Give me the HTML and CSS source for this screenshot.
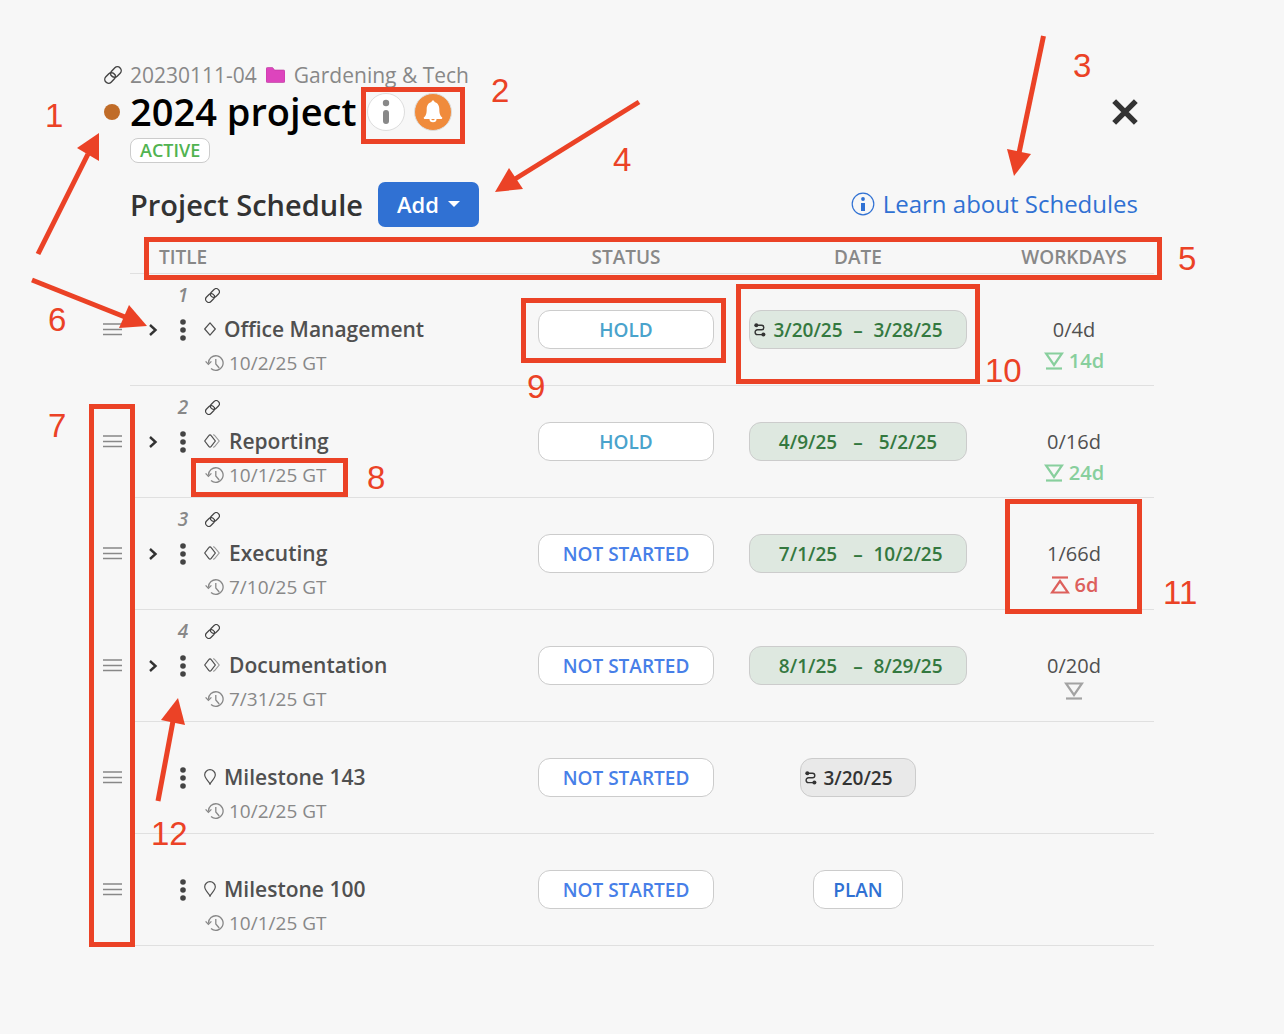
FILE: index.html
```
<!DOCTYPE html>
<html lang="en">
<head>
  <meta charset="UTF-8" />
  <meta name="viewport" content="width=device-width, initial-scale=1.0" />
  <title>2024 project - Project Schedule</title>
  <link rel="stylesheet" href="styles.css">
</head>
<body>
  <!-- Shared icons -->
  <svg class="sprite" aria-hidden="true">
    <symbol id="i-link" viewBox="0 0 24 24">
      <g fill="none" stroke="currentColor" stroke-width="1.900" stroke-linecap="round">
        <path d="M10 13a5 5 0 0 0 7.54.54l4-4a5 5 0 0 0-7.07-7.07l-4.720 4.710a4.500 4.500 0 0 0-.6 5" />
        <path d="M14 11a5 5 0 0 0-7.54-.54l-4 4a5 5 0 0 0 7.07 7.07l4.710-4.710a4.500 4.500 0 0 0 .6-5" />
      </g>
    </symbol>
    <symbol id="i-drag" viewBox="0 0 19 13">
      <path d="M0 1h19M0 6.500h19M0 11.500h19" stroke="currentColor" stroke-width="1.300" />
    </symbol>
    <symbol id="i-chevron" viewBox="0 0 10 12">
      <path d="M2 1l5.500 5L2 11" fill="none" stroke="currentColor" stroke-width="2.400" />
    </symbol>
    <symbol id="i-dots" viewBox="0 0 6 22">
      <g fill="currentColor"><circle cx="3" cy="3" r="2.800" /><circle cx="3" cy="11" r="2.800" /><circle cx="3" cy="19" r="2.800" /></g>
    </symbol>
    <symbol id="i-diamond" viewBox="0 0 12 14">
      <path d="M6 .8L11.300 7 6 13.200.7 7z" fill="none" stroke="currentColor" stroke-width="1.200" stroke-linejoin="round" />
    </symbol>
    <symbol id="i-diamonds" viewBox="0 0 17 14">
      <path d="M6 .8q.7 0 1.200.8L11.300 7 7.200 12.400Q6 14 4.800 12.400L.7 7 4.800 1.600Q5.300.8 6 .8z" fill="none" stroke="currentColor" stroke-width="1.200" />
      <path d="M9 .8q1.200 0 1.800.8L15.200 7l-4.400 5.400q-.6.8-1.800.8" fill="none" stroke="#999" stroke-width="1.100" />
    </symbol>
    <symbol id="i-pin" viewBox="0 0 12 16">
      <path d="M6 15.200C5 12.500.7 9.500.7 5.800a5.300 5.100 0 0 1 10.600 0C11.300 9.500 7 12.500 6 15.200z" fill="none" stroke="currentColor" stroke-width="1.200" />
    </symbol>
    <symbol id="i-history" viewBox="0 0 19 17">
      <g fill="none" stroke="currentColor" stroke-width="1.300">
        <path d="M3.500 8.500A7.300 7.300 0 1 1 6 13.600" />
        <path d="M.6 6.400l2.800 3 3-3M10.800 4v5l3.400 4" />
      </g>
    </symbol>
    <symbol id="i-route" viewBox="0 0 12 14">
      <path d="M2.500 2.200h5a2.300 2.300 0 0 1 0 4.600h-4a2.300 2.300 0 0 0 0 4.800h5.500" fill="none" stroke="#333" stroke-width="1.400" />
      <circle cx="2.300" cy="2.200" r="2" fill="#333" /><circle cx="9.400" cy="11.600" r="2" fill="#333" />
    </symbol>
    <symbol id="i-down" viewBox="0 0 20 18">
      <path d="M2 1.500h16L10 13z" fill="none" stroke="currentColor" stroke-width="2.200" />
      <path d="M2 16.500h16" stroke="currentColor" stroke-width="2.200" />
    </symbol>
    <symbol id="i-up" viewBox="0 0 20 18">
      <path d="M2 16.500h16L10 5z" fill="none" stroke="currentColor" stroke-width="2.200" />
      <path d="M2 1.500h16" stroke="currentColor" stroke-width="2.200" />
    </symbol>
  </svg>

  <main class="page">
    <header class="project">
      <a class="gutter" href="#" aria-label="Copy project link"><svg class="icon-link-lg"><use href="#i-link" /></svg></a>
      <div class="crumbs">
        <span>20230111-04</span>
        <svg class="icon-folder" viewBox="0 0 19 16"><path d="M0 2Q0 .5 1.500.5H6q1 0 1.500 1L8.500 3H17.500Q19 3 19 4.500V14Q19 15.500 17.500 15.500H1.500Q0 15.500 0 14z" fill="#dd44bd" stroke="#b8389c" stroke-width=".6" /></svg>
        <span>Gardening &amp; Tech</span>
      </div>

      <span class="gutter"><span class="dot"></span></span>
      <div class="title-row">
        <h1>2024 project</h1>
        <button class="round" aria-label="Project info">
          <svg class="icon-info" viewBox="0 0 8 26"><circle cx="4" cy="4" r="3.200" fill="#888" /><rect x="1" y="11" width="6" height="14" rx="3" fill="#888" /></svg>
        </button>
        <button class="round bell" aria-label="Notifications">
          <svg class="icon-bell" viewBox="0 0 20 23">
            <path d="M10 .5c1 0 1.500.7 1.500 1.600C15 3 16.300 6 16.300 9c0 5 1 7 3 8.500 0 1-.5 1.500-1.500 1.500H2.200C1.200 19 .7 18.500.7 17.500c2-1.500 3-3.500 3-8.500 0-3 1.300-6 4.800-6.900C8.500 1.200 9 .5 10 .5z" fill="#fff" />
            <path d="M6.500 19a3.500 3.200 0 0 0 7 0z" fill="#fff" /><path d="M8.300 19a1.700 1.300 0 0 0 3.400 0z" fill="#f08b3c" />
          </svg>
        </button>
        <button class="close" aria-label="Close">
          <svg viewBox="0 0 24 24"><path d="M2 2l20 20M22 2L2 22" stroke="#333" stroke-width="5" /></svg>
        </button>
      </div>

      <span class="badge">ACTIVE</span>
    </header>

    <div class="toolbar">
      <h2>Project Schedule</h2>
      <button class="add">Add <span class="caret"></span></button>
      <a class="learn" href="#">
        <svg viewBox="0 0 24 24"><circle cx="12" cy="12" r="10.800" fill="none" stroke="currentColor" stroke-width="1.200" /><circle cx="12" cy="7" r="1.900" fill="currentColor" /><path d="M10 11h4v8h-4z" fill="currentColor" /></svg>
        Learn about Schedules
      </a>
    </div>

    <table class="schedule">
      <thead>
        <tr>
          <td class="drag"></td>
          <th class="col-title" scope="col">TITLE</th>
          <th class="col-status" scope="col">STATUS</th>
          <th class="col-date" scope="col">DATE</th>
          <th class="col-days" scope="col">WORKDAYS</th>
        </tr>
      </thead>
      <tbody>
        <tr>
          <td class="drag"><button aria-label="Reorder"><svg><use href="#i-drag" /></svg></button></td>
          <td>
            <div class="item">
              <span class="num">1</span>
              <a class="line link" href="#" aria-label="Copy link"><svg class="icon-link"><use href="#i-link" /></svg></a>
              <button class="expand" aria-label="Expand"><svg><use href="#i-chevron" /></svg></button>
              <button class="menu" aria-label="More actions"><svg><use href="#i-dots" /></svg></button>
              <div class="line name"><svg class="icon-diamond"><use href="#i-diamond" /></svg>Office Management</div>
              <div class="line edited"><svg class="icon-history"><use href="#i-history" /></svg>10/2/25 GT</div>
            </div>
          </td>
          <td class="center"><button class="pill status hold">HOLD</button></td>
          <td class="center"><button class="pill range"><svg class="icon-route"><use href="#i-route" /></svg><span>3/20/25</span><span>–</span><span>3/28/25</span></button></td>
          <td class="days"><div class="spent">0/4d</div><div class="slack early"><svg><use href="#i-down" /></svg><span>14d</span></div></td>
        </tr>
        <tr>
          <td class="drag"><button aria-label="Reorder"><svg><use href="#i-drag" /></svg></button></td>
          <td>
            <div class="item">
              <span class="num">2</span>
              <a class="line link" href="#" aria-label="Copy link"><svg class="icon-link"><use href="#i-link" /></svg></a>
              <button class="expand" aria-label="Expand"><svg><use href="#i-chevron" /></svg></button>
              <button class="menu" aria-label="More actions"><svg><use href="#i-dots" /></svg></button>
              <div class="line name"><svg class="icon-diamonds"><use href="#i-diamonds" /></svg>Reporting</div>
              <div class="line edited"><svg class="icon-history"><use href="#i-history" /></svg>10/1/25 GT</div>
            </div>
          </td>
          <td class="center"><button class="pill status hold">HOLD</button></td>
          <td class="center"><button class="pill range"><span>4/9/25</span><span>–</span><span>5/2/25</span></button></td>
          <td class="days"><div class="spent">0/16d</div><div class="slack early"><svg><use href="#i-down" /></svg><span>24d</span></div></td>
        </tr>
        <tr>
          <td class="drag"><button aria-label="Reorder"><svg><use href="#i-drag" /></svg></button></td>
          <td>
            <div class="item">
              <span class="num">3</span>
              <a class="line link" href="#" aria-label="Copy link"><svg class="icon-link"><use href="#i-link" /></svg></a>
              <button class="expand" aria-label="Expand"><svg><use href="#i-chevron" /></svg></button>
              <button class="menu" aria-label="More actions"><svg><use href="#i-dots" /></svg></button>
              <div class="line name"><svg class="icon-diamonds"><use href="#i-diamonds" /></svg>Executing</div>
              <div class="line edited"><svg class="icon-history"><use href="#i-history" /></svg>7/10/25 GT</div>
            </div>
          </td>
          <td class="center"><button class="pill status">NOT STARTED</button></td>
          <td class="center"><button class="pill range"><span>7/1/25</span><span>–</span><span>10/2/25</span></button></td>
          <td class="days"><div class="spent">1/66d</div><div class="slack late"><svg><use href="#i-up" /></svg><span>6d</span></div></td>
        </tr>
        <tr>
          <td class="drag"><button aria-label="Reorder"><svg><use href="#i-drag" /></svg></button></td>
          <td>
            <div class="item">
              <span class="num">4</span>
              <a class="line link" href="#" aria-label="Copy link"><svg class="icon-link"><use href="#i-link" /></svg></a>
              <button class="expand" aria-label="Expand"><svg><use href="#i-chevron" /></svg></button>
              <button class="menu" aria-label="More actions"><svg><use href="#i-dots" /></svg></button>
              <div class="line name"><svg class="icon-diamonds"><use href="#i-diamonds" /></svg>Documentation</div>
              <div class="line edited"><svg class="icon-history"><use href="#i-history" /></svg>7/31/25 GT</div>
            </div>
          </td>
          <td class="center"><button class="pill status">NOT STARTED</button></td>
          <td class="center"><button class="pill range"><span>8/1/25</span><span>–</span><span>8/29/25</span></button></td>
          <td class="days"><div class="spent">0/20d</div><div class="slack"><svg><use href="#i-down" /></svg></div></td>
        </tr>
        <tr>
          <td class="drag"><button aria-label="Reorder"><svg><use href="#i-drag" /></svg></button></td>
          <td>
            <div class="item">
              <button class="menu" aria-label="More actions"><svg><use href="#i-dots" /></svg></button>
              <div class="line name"><svg class="icon-pin"><use href="#i-pin" /></svg>Milestone 143</div>
              <div class="line edited"><svg class="icon-history"><use href="#i-history" /></svg>10/2/25 GT</div>
            </div>
          </td>
          <td class="center"><button class="pill status">NOT STARTED</button></td>
          <td class="center"><button class="pill single"><svg class="icon-route"><use href="#i-route" /></svg><span>3/20/25</span></button></td>
          <td></td>
        </tr>
        <tr>
          <td class="drag"><button aria-label="Reorder"><svg><use href="#i-drag" /></svg></button></td>
          <td>
            <div class="item">
              <button class="menu" aria-label="More actions"><svg><use href="#i-dots" /></svg></button>
              <div class="line name"><svg class="icon-pin"><use href="#i-pin" /></svg>Milestone 100</div>
              <div class="line edited"><svg class="icon-history"><use href="#i-history" /></svg>10/1/25 GT</div>
            </div>
          </td>
          <td class="center"><button class="pill status">NOT STARTED</button></td>
          <td class="center"><button class="pill plan">PLAN</button></td>
          <td></td>
        </tr>
      </tbody>
    </table>
  </main>

  <!-- Numbered callouts drawn over the page -->
  <svg class="callouts">
    <g class="boxes">
      <rect x="363.500" y="89.500" width="99" height="52" />
      <rect x="146.500" y="239.500" width="1013" height="38" />
      <rect x="523.500" y="300.500" width="200" height="60" />
      <rect x="738.500" y="286.500" width="239" height="95" />
      <rect x="91.500" y="406.500" width="41" height="538" />
      <rect x="193.500" y="460.500" width="152" height="34" />
      <rect x="1007.500" y="501.500" width="132" height="110" />
    </g>
    <g class="arrows">
      <path d="M38 254L88 154" />
      <path d="M1043.500 36L1019 153" />
      <path d="M639 102L515 179" />
      <path d="M32 280L125 317" />
      <path d="M158 801L173 721" />
    </g>
    <g class="heads">
      <path d="M99 133L99 161L77 148z" />
      <path d="M1014 176L1007 149L1031 154z" />
      <path d="M495 192L509 168L523 189z" />
      <path d="M147 326L129 305L119 328z" />
      <path d="M178 698L161 720L185 725z" />
    </g>
    <g class="numbers">
      <text x="45" y="127">1</text>
      <text x="491" y="102">2</text>
      <text x="1073" y="77">3</text>
      <text x="613" y="171">4</text>
      <text x="1178" y="270">5</text>
      <text x="48" y="331">6</text>
      <text x="48" y="437">7</text>
      <text x="367" y="489">8</text>
      <text x="527" y="398">9</text>
      <text x="985" y="382">10</text>
      <text x="1163" y="604">11</text>
      <text x="151" y="845">12</text>
    </g>
  </svg>
</body>
</html>
```

FILE: styles.css
```
* {
  box-sizing: border-box;
}
body {
  position: relative;
  margin: 0;
  background: #f7f7f7;
  color: #505050;
  font-family: "Open Sans", "Noto Sans", sans-serif;
  font-size: 19px;
}
button {
  padding: 0;
  border: 0;
  background: none;
  color: inherit;
  font: inherit;
  cursor: pointer;
}
a {
  color: inherit;
  text-decoration: none;
}
svg {
  display: block;
  flex: none;
}
.sprite {
  position: absolute;
  width: 0;
  height: 0;
}
.page {
  padding: 60px 130px 80px 90px;
}

/* Project header */
.project {
  display: grid;
  grid-template-columns: 40px 1fr;
  align-items: center;
}
.gutter {
  padding-left: 14px;
  color: #444;
}
.icon-link-lg {
  width: 18px;
  height: 18px;
}
.crumbs {
  display: flex;
  align-items: center;
  gap: 9px;
  height: 29px;
  font-size: 21px;
  line-height: 24px;
  color: #888;
}
.icon-folder {
  width: 19px;
  height: 16px;
}
.dot {
  display: block;
  width: 16px;
  height: 16px;
  border-radius: 50%;
  background: #c06c28;
}
.title-row {
  display: flex;
  align-items: center;
  height: 45px;
  padding-right: 16px;
}
h1 {
  margin: 0;
  font-size: 38px;
  line-height: 45px;
  font-weight: 600;
  color: #000;
}
.round {
  display: flex;
  align-items: center;
  justify-content: center;
  width: 38px;
  height: 38px;
  margin-left: 9px;
  border: 1px solid #ddd;
  border-radius: 50%;
  background: #fff;
}
h1 + .round {
  margin-left: 11px;
}
.round.bell {
  background: #f08b3c;
}
.icon-info {
  width: 8px;
  height: 26px;
}
.icon-bell {
  width: 20px;
  height: 23px;
}
.close {
  width: 26px;
  height: 26px;
  margin-left: auto;
}
.badge {
  grid-column: 2;
  justify-self: start;
  margin-top: 4px;
  padding: 0 9px;
  border: 1px solid #ccc;
  border-radius: 8px;
  background: #fff;
  color: #51b351;
  font-size: 18px;
  line-height: 23px;
  font-weight: 600;
}

/* Schedule toolbar */
.toolbar {
  display: flex;
  align-items: center;
  gap: 15px;
  margin: 19px 0 13px;
  padding: 0 16px 0 40px;
}
h2 {
  margin: 0;
  font-size: 29px;
  line-height: 45px;
  font-weight: 600;
  color: #333;
}
.add {
  display: flex;
  align-items: center;
  gap: 9px;
  height: 45px;
  padding: 0 19px 2px;
  border-radius: 7px;
  background: #3071d3;
  color: #fff;
  font-size: 22px;
  font-weight: 600;
}
.caret {
  border: 6px solid transparent;
  border-top-color: #fff;
  border-bottom: 0;
}
.learn {
  display: flex;
  align-items: center;
  gap: 8px;
  margin-left: auto;
  padding-bottom: 2px;
  color: #3071d3;
  font-size: 24px;
}
.learn svg {
  width: 24px;
  height: 24px;
}

/* Schedule table */
.schedule {
  width: 100%;
  table-layout: fixed;
  border-collapse: separate;
  border-spacing: 0;
}
.schedule th,
.schedule td {
  padding: 0;
  border-bottom: 1px solid #e0e0e0;
}
.schedule th {
  height: 34px;
  color: #888;
  font-size: 19px;
  font-weight: 600;
}
.schedule .drag {
  width: 40px;
  padding: 0 0 2px 13px;
  border: 0;
  color: #888;
}
.drag svg {
  width: 19px;
  height: 13px;
}
.schedule .col-title {
  padding-left: 29px;
  text-align: left;
}
.col-status {
  width: 192px;
}
.col-date {
  width: 272px;
}
.col-days {
  width: 160px;
}
.item {
  display: grid;
  grid-template-columns: 46px 14px 1fr;
  grid-template-rows: repeat(3, 34px);
  align-items: center;
  justify-items: center;
  padding: 4px 0 5px;
}
.num {
  grid-area: 1 / 2;
  color: #888;
  font-style: italic;
  font-weight: 600;
}
.line {
  display: flex;
  align-items: center;
  justify-self: start;
  grid-column: 3;
  padding-left: 14px;
}
.link {
  grid-row: 1;
  padding-left: 15px;
  color: #444;
}
.icon-link {
  width: 15px;
  height: 15px;
}
.expand,
.menu {
  padding-top: 2px;
}
.expand {
  grid-area: 2 / 1;
  color: #333;
}
.expand svg {
  width: 10px;
  height: 12px;
}
.menu {
  grid-area: 2 / 2;
  color: #444;
}
.menu svg {
  width: 6px;
  height: 22px;
}
.name {
  grid-row: 2;
  gap: 8px;
  font-size: 21px;
  font-weight: 600;
}
.icon-diamond {
  width: 12px;
  height: 14px;
}
.icon-diamonds {
  width: 17px;
  height: 14px;
}
.icon-pin {
  width: 12px;
  height: 16px;
}
.edited {
  grid-row: 3;
  gap: 5px;
  padding-left: 15px;
  color: #888;
}
.icon-history {
  width: 19px;
  height: 17px;
}
.center {
  text-align: center;
}
.pill {
  height: 39px;
  border: 1px solid #ccc;
  border-radius: 12px;
  background: #fff;
  font-weight: 600;
}
.status {
  width: 176px;
  color: #477fe8;
}
.hold {
  color: #4aa3cc;
}
.range,
.single {
  display: inline-grid;
  align-items: center;
  vertical-align: middle;
}
.range {
  grid-template-columns: 1fr 70px 30px 70px 1fr;
  width: 218px;
  background: #dee8e0;
  color: #34783f;
}
.range span:first-child {
  grid-column: 2;
}
.single {
  grid-template-columns: 1fr 70px 1fr;
  width: 116px;
  background: #e9e9e9;
  color: #333;
}
.icon-route {
  width: 12px;
  height: 14px;
  margin-left: 4px;
}
.plan {
  width: 90px;
  color: #3071d3;
}
.schedule .days {
  padding-top: 40px;
  vertical-align: top;
}
.spent {
  font-size: 20px;
  line-height: 32px;
  text-align: center;
}
.slack {
  display: flex;
  align-items: center;
  justify-content: center;
  gap: 5px;
  color: #a3a3a3;
  font-size: 20px;
  line-height: 30px;
  font-weight: 600;
}
.slack svg {
  width: 20px;
  height: 18px;
}
.early {
  color: #88cf9d;
}
.late {
  color: #dd605c;
}

/* Callouts */
.callouts {
  position: absolute;
  top: 0;
  left: 0;
  width: 100%;
  height: 100%;
  pointer-events: none;
}
.boxes,
.arrows {
  fill: none;
  stroke: #eb4226;
  stroke-width: 5px;
}
.heads {
  fill: #eb4226;
}
.numbers {
  fill: #eb4226;
  font-family: "Liberation Sans", Arial, sans-serif;
  font-size: 33px;
}
```
